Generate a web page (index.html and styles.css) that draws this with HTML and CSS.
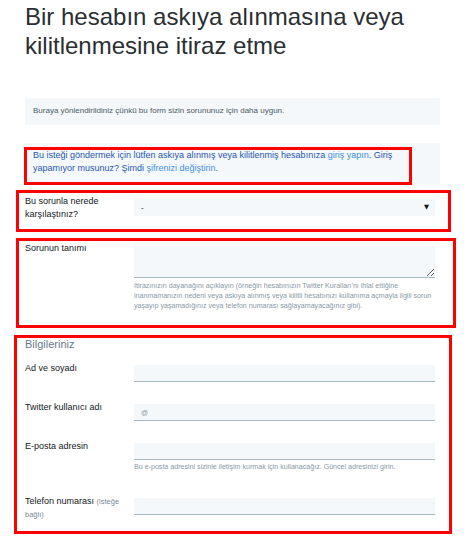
FILE: index.html
```html
<!DOCTYPE html>
<html lang="tr">
<head>
    <meta charset="UTF-8">
    <meta name="viewport" content="width=device-width, initial-scale=1.0">
    <title>Bir hesabın askıya alınmasına veya kilitlenmesine itiraz etme</title>
    <link rel="stylesheet" href="styles.css">
</head>
<body>
    <div class="page">
        <h1 class="title">Bir hesabın askıya alınmasına veya kilitlenmesine itiraz etme</h1>

        <div class="notice">Buraya yönlendirildiniz çünkü bu form sizin sorununuz için daha uygun.</div>

        <div class="notice notice-login">
            Bu isteği göndermek için lütfen askıya alınmış veya kilitlenmiş hesabınıza <a href="#">giriş yapın</a>. Giriş yapamıyor musunuz? Şimdi <a href="#">şifrenizi değiştirin</a>.
        </div>

        <div class="section section-where">
            <div class="row">
                <label class="label" for="where">Bu sorunla nerede karşılaştınız?</label>
                <div class="field select-wrap">
                    <select class="select" id="where">
                        <option>-</option>
                    </select>
                </div>
            </div>
        </div>

        <div class="section section-desc">
            <div class="row">
                <label class="label" for="desc">Sorunun tanımı</label>
                <div class="field">
                    <textarea class="textarea" id="desc"></textarea>
                    <div class="help">İtirazınızın dayanağını açıklayın (örneğin hesabınızın Twitter Kuralları'nı ihlal ettiğine<br>inanmamanızın nedeni veya askıya alınmış veya kilitli hesabınızı kullanıma açmayla ilgili sorun yaşayıp yaşamadığınız veya telefon numarası sağlayamayacağınız gibi).</div>
                </div>
            </div>
        </div>

        <div class="section section-info">
            <h2 class="heading">Bilgileriniz</h2>
            <div class="row">
                <label class="label" for="name">Ad ve soyadı</label>
                <div class="field"><input class="input" id="name" type="text"></div>
            </div>
            <div class="row">
                <label class="label" for="user">Twitter kullanıcı adı</label>
                <div class="field"><input class="input" id="user" type="text" placeholder="@"></div>
            </div>
            <div class="row">
                <label class="label" for="mail">E-posta adresin</label>
                <div class="field">
                    <input class="input" id="mail" type="email">
                    <div class="help help-mail">Bu e-posta adresini sizinle iletişim kurmak için kullanacağız. Güncel adresinizi girin.</div>
                </div>
            </div>
            <div class="row">
                <label class="label" for="phone">Telefon numarası <span class="optional">(isteğe bağlı)</span></label>
                <div class="field"><input class="input" id="phone" type="tel"></div>
            </div>
        </div>
    </div>
</body>
</html>
```

FILE: styles.css
```css
body {
    margin: 0;
    padding: 0;
    background: #fff;
    color: #14171a;
    font-family: "Liberation Sans", Arial, sans-serif;
}
.page {
    width: 415px;
    margin-left: 25px;
    padding-top: 2px;
}
.title {
    margin: 0;
    font-size: 24px;
    line-height: 29px;
    font-weight: normal;
    color: #292f33;
}

.notice {
    margin-top: 38px;
    padding: 8px 8px 9px 8px;
    background: #f5f8fa;
    color: #4a5a67;
    font-size: 8px;
    line-height: 10px;
}
.notice-login {
    position: relative;
    margin-top: 18px;
    padding: 6px 12px 9px 8px;
    font-size: 9px;
    line-height: 13px;
    color: #1f57b0;
}
.notice-login a {
    color: #3d8fe0;
    text-decoration: none;
}
/* red annotation frame drawn over the login notice */
.notice-login::after {
    content: '';
    position: absolute;
    top: 4px;
    left: -1px;
    bottom: -1px;
    width: 388px;
    border: 3px solid #f00;
    box-sizing: border-box;
}

.section {
    box-sizing: border-box;
    border: 3px solid #f00;
}
.section-where {
    width: 435px;
    margin: 6px 0 0 -9px;
    padding: 2px 13px 8px 6px;
}
.section-desc {
    width: 440px;
    margin: 6px 0 0 -9px;
    padding: 1px 18px 14px 6px;
}
.section-info {
    width: 438px;
    margin: 7px 0 0 -11px;
    padding: 0 14px 10px 8px;
}

.row {
    display: grid;
    grid-template-columns: 109px 1fr;
    align-items: start;
}
.heading {
    margin: 0;
    font-size: 11px;
    line-height: 12px;
    font-weight: normal;
    color: #687a8a;
}
.heading + .row {
    margin-top: 12px;
}
.row + .row {
    margin-top: 19px;
}
.label {
    padding-right: 8px;
    font-size: 9px;
    line-height: 13px;
    color: #14171a;
}
.optional {
    font-size: 7.5px;
    color: #7a8a98;
}
.field {
    margin-top: 3px;
}
.section-where .field,
.section-desc .field {
    margin-top: 4px;
}

.input,
.select,
.textarea {
    display: block;
    width: 100%;
    box-sizing: border-box;
    margin: 0;
    border: 0;
    border-radius: 0;
    background: #f5f8fa;
    font-family: inherit;
    outline: none;
}
.input {
    height: 17px;
    padding: 0 7px;
    border-bottom: 1px solid #aab8c2;
    font-size: 7px;
    color: #14171a;
}
.input::placeholder {
    color: #8c99a4;
}
.textarea {
    height: 32px;
    padding: 4px 7px;
    border-bottom: 1px solid #aab8c2;
    font-size: 8px;
}
.select-wrap {
    position: relative;
}
.select {
    height: 17px;
    padding: 0 7px;
    font-size: 8px;
    color: #14171a;
    appearance: none;
    -webkit-appearance: none;
}
.select-wrap::after {
    content: '▼';
    position: absolute;
    right: 6px;
    top: 0;
    line-height: 17px;
    font-family: "DejaVu Sans", sans-serif;
    font-size: 6.5px;
    color: #14171a;
    pointer-events: none;
}

.help {
    margin-top: 3px;
    font-size: 7.1px;
    line-height: 10px;
    color: #8899a6;
}
.help-mail {
    margin: 2px 0 4px;
}
```
